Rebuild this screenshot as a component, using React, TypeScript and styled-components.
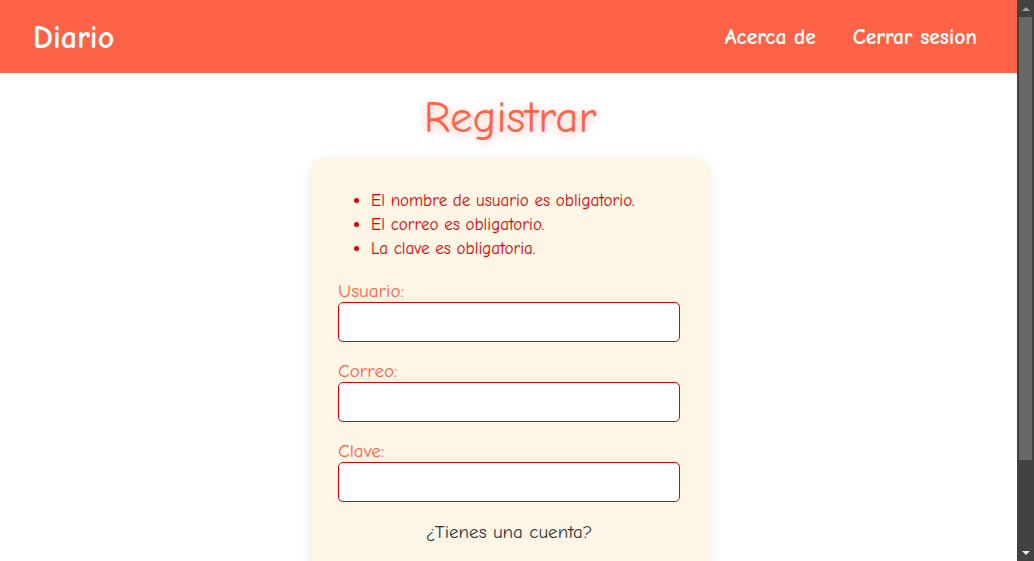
import React from "react";
import styled, { createGlobalStyle } from "styled-components";

const FONT = `"Comic Sans MS", "Comic Neue", "Open Sans", sans-serif`;

const Global = createGlobalStyle`
  html, body {
    background: #ffffff;
  }
  body {
    margin: 0;
    color: #333333;
    font-family: ${FONT};
  }
  * { box-sizing: border-box; }
`;

const Page = styled.div`
  margin-right: 17px;
  min-height: 561px;
  display: flex;
  flex-direction: column;
`;

const NavBar = styled.header`
  height: 73px;
  background: #ff6347;
  display: flex;
  align-items: center;
  justify-content: space-between;
  padding: 0 40px 0 33px;
`;

const Brand = styled.a`
  color: #ffffff;
  font-weight: 700;
  font-size: 32px;
  text-decoration: none;
  padding-top: 2px;
`;

const NavLinks = styled.nav`
  display: flex;
  gap: 37px;
`;

const NavLink = styled.a`
  color: #ffffff;
  font-weight: 700;
  font-size: 21.5px;
  text-decoration: none;
`;

const Main = styled.main`
  display: flex;
  flex-direction: column;
  align-items: center;
  padding: 19px 0 0 3px;
`;

const Title = styled.h1`
  margin: 0 0 15px;
  font-size: 45px;
  font-weight: 400;
  line-height: 51px;
  color: #ff6347;
  text-shadow: 0 2px 8px rgba(255, 99, 71, 0.45);
`;

const Card = styled.form`
  width: 400px;
  background: #fdf5e6;
  border-radius: 15px;
  box-shadow: 0 2px 12px rgba(0, 0, 0, 0.08);
  padding: 28px 30px 40px 28px;
  display: flex;
  flex-direction: column;
`;

const ErrorList = styled.ul`
  margin: 3px 0 19px;
  padding-left: 33px;
  color: #e00000;
  font-size: 17px;
  line-height: 24px;
`;

const Field = styled.div`
  display: flex;
  flex-direction: column;
  margin-bottom: 18px;
`;

const Label = styled.label`
  color: #ff6347;
  font-size: 19px;
  line-height: 22px;
`;

const Input = styled.input`
  height: 40px;
  width: 100%;
  background: #ffffff;
  color: #333333;
  border: 1px solid #e00000;
  border-radius: 5px;
  padding: 0 10px;
  font-family: ${FONT};
  font-size: 16px;
  outline: none;
`;

const Footer = styled.p`
  margin: 0;
  text-align: center;
  font-size: 19px;
  line-height: 24px;
  color: #333333;
`;

/* Browser scrollbar as seen in the screenshot, laid over the right edge */
const ScrollBar = styled.div`
  position: fixed;
  top: 0;
  right: 0;
  width: 17px;
  height: 100vh;
  background: #424242;
  display: flex;
  flex-direction: column;
  align-items: center;
`;

const Arrow = styled.div<{ $dir: "up" | "down" }>`
  width: 17px;
  height: 17px;
  display: flex;
  align-items: center;
  justify-content: center;
  &::after {
    content: "";
    border-left: 4px solid transparent;
    border-right: 4px solid transparent;
    ${(p) =>
      p.$dir === "up"
        ? "border-bottom: 4px solid #a3a3a3;"
        : "border-top: 4px solid #e8e8e8;"}
  }
`;

const Track = styled.div`
  flex: 1;
  width: 100%;
  padding: 0 2px;
  display: flex;
  flex-direction: column;
`;

const Thumb = styled.div`
  height: 443px;
  background: #686868;
`;

const errors = [
  "El nombre de usuario es obligatorio.",
  "El correo es obligatorio.",
  "La clave es obligatoria.",
];

const fields = [
  { id: "usuario", label: "Usuario:", type: "text" },
  { id: "correo", label: "Correo:", type: "email" },
  { id: "clave", label: "Clave:", type: "password" },
];

export default function App() {
  return (
    <>
      <Global />
      <Page>
        <NavBar>
          <Brand href="#">Diario</Brand>
          <NavLinks>
            <NavLink href="#">Acerca de</NavLink>
            <NavLink href="#">Cerrar sesion</NavLink>
          </NavLinks>
        </NavBar>
        <Main>
          <Title>Registrar</Title>
          <Card onSubmit={(e) => e.preventDefault()}>
            <ErrorList>
              {errors.map((e) => (
                <li key={e}>{e}</li>
              ))}
            </ErrorList>
            {fields.map((f) => (
              <Field key={f.id}>
                <Label htmlFor={f.id}>{f.label}</Label>
                <Input id={f.id} type={f.type} />
              </Field>
            ))}
            <Footer>¿Tienes una cuenta?</Footer>
          </Card>
        </Main>
      </Page>
      <ScrollBar aria-hidden>
        <Arrow $dir="up" />
        <Track>
          <Thumb />
        </Track>
        <Arrow $dir="down" />
      </ScrollBar>
    </>
  );
}
